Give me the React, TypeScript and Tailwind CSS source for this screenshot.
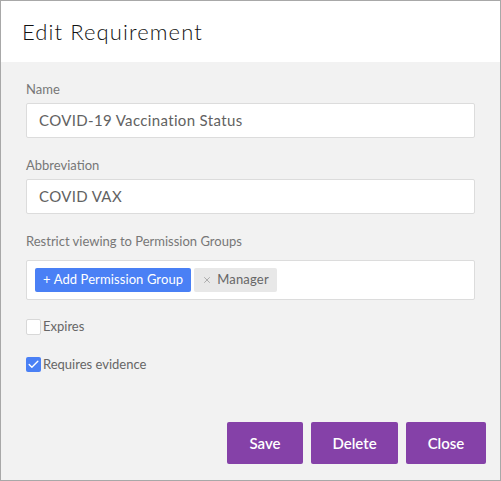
import { Check, X } from 'lucide-react'

const font = { fontFamily: 'Lato, "Noto Sans", sans-serif' }

function Field({ label, value }: { label: string; value: string }) {
  return (
    <div className="flex flex-col">
      <label className="h-4 text-[13px] leading-4 text-[#777]">{label}</label>
      <div className="mt-[6px] flex h-[35px] items-center rounded-[2px] border border-[#dcdcdc] bg-white px-[12px] text-[15px] tracking-[0.35px] text-[#626262]">
        {value}
      </div>
    </div>
  )
}

export default function App() {
  return (
    <div className="h-[481px] w-[501px] border border-[#a8a8a8] bg-[#f2f2f2]" style={font}>
      <div className="flex h-[61px] items-center bg-white px-[21px] text-[22px] font-light tracking-[1.1px] text-[#111]">
        Edit Requirement
      </div>

      <div className="flex flex-col px-[25px] pt-[19px]">
        <Field label="Name" value="COVID-19 Vaccination Status" />
        <div className="mt-[19px]">
          <Field label="Abbreviation" value="COVID VAX" />
        </div>

        <div className="mt-[19px] flex flex-col">
          <label className="h-4 text-[13px] leading-4 text-[#777]">Restrict viewing to Permission Groups</label>
          <div className="mt-[11px] flex h-[40px] items-center gap-[3px] rounded-[2px] border border-[#dcdcdc] bg-white px-[8px]">
            <button className="flex h-[24px] items-center rounded-[2px] bg-[#4a80f5] px-[8px] text-[13px] tracking-[0.1px] text-white">
              + Add Permission Group
            </button>
            <span className="flex h-[24px] items-center gap-[5px] rounded-[2px] bg-[#e8e8e8] px-[8px] text-[13px] tracking-[0.2px] text-[#666]">
              <X size={10} strokeWidth={1.5} className="text-[#888]" />
              Manager
            </span>
          </div>
        </div>

        <div className="mt-[17px] flex items-center gap-[2px]">
          <span className="h-[16px] w-[15px] rounded-[2px] border border-[#d8d8d8] bg-white" />
          <span className="text-[13px] text-[#666]">Expires</span>
        </div>

        <div className="mt-[18px] flex items-center gap-[2px]">
          <span className="flex h-[15px] w-[15px] items-center justify-center rounded-[2px] bg-[#4a80f5]">
            <Check size={13} strokeWidth={2.5} className="text-white" />
          </span>
          <span className="text-[13px] text-[#666]">Requires evidence</span>
        </div>

        <div className="-mr-[11px] mt-[48px] flex justify-end gap-[8px]">
          <button className="h-[42px] w-[76px] rounded-[2px] bg-[#8541a8] text-[15px] font-semibold text-white">Save</button>
          <button className="h-[42px] w-[87px] rounded-[2px] bg-[#8541a8] text-[15px] font-semibold text-white">Delete</button>
          <button className="h-[42px] w-[80px] rounded-[2px] bg-[#8541a8] text-[15px] font-semibold text-white">Close</button>
        </div>
      </div>
    </div>
  )
}
